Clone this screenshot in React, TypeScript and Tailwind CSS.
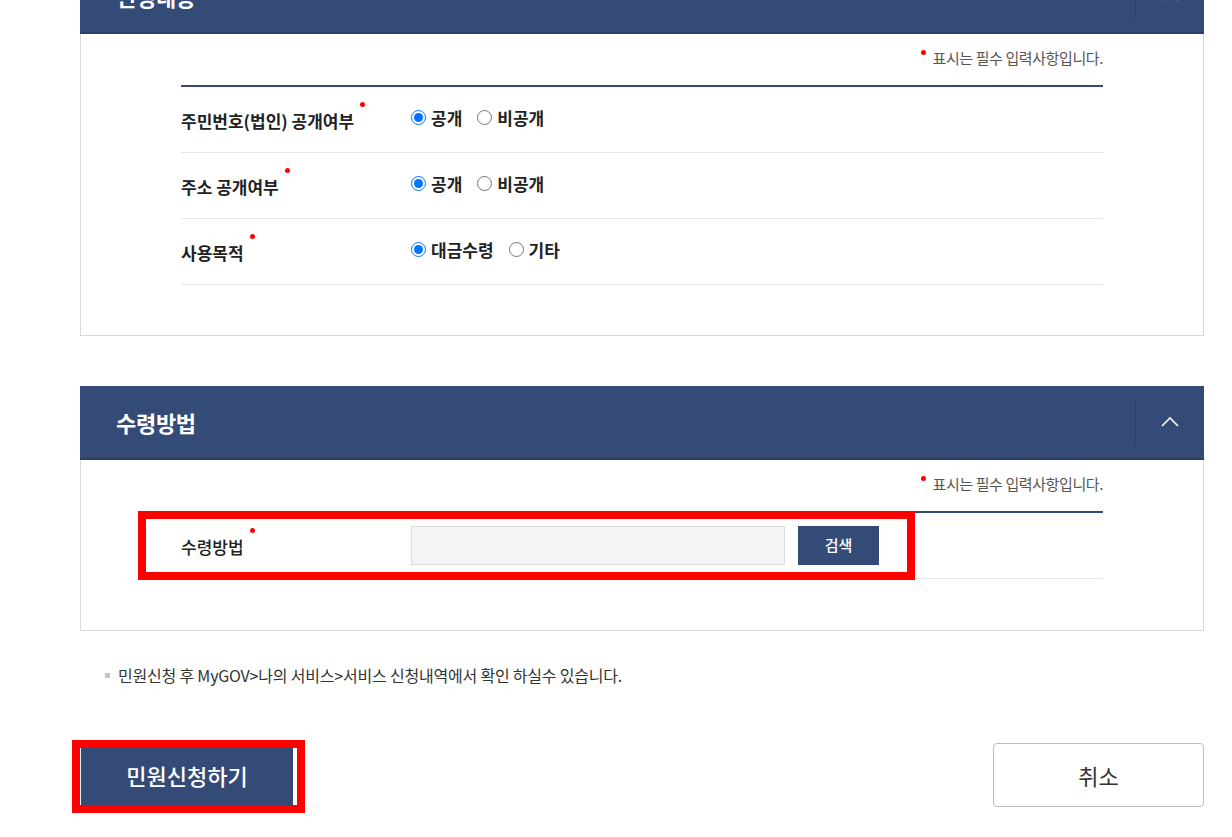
import type { ReactNode } from "react";

function Chevron() {
  return (
    <svg width="18" height="10" viewBox="0 0 18 10" fill="none">
      <polyline points="1,9 9,1 17,9" stroke="#ffffff" strokeWidth="1.6" />
    </svg>
  );
}

function Panel({ title, children, tall }: { title: string; children: ReactNode; tall?: boolean }) {
  return (
    <div>
      {/* header */}
      <div className="flex h-[74px] items-center bg-[#344b77] border-b-2 border-[#2a3f67]">
        <h2 className="flex-1 px-[36px] text-[22px] font-bold text-white tracking-[-0.3px]">{title}</h2>
        <div className="self-stretch my-[13px] w-px bg-[#2b4068]" />
        <button className="flex w-[68px] items-center justify-center">
          <Chevron />
        </button>
      </div>
      {/* body */}
      <div
        className={`border-x border-b border-[#d9d9d9] px-[100px] pt-[14px] ${tall ? "pb-[51px]" : "pb-[50px]"}`}
      >
        <div className="flex h-[20px] items-center justify-end text-[15px] text-[#555] tracking-[-0.4px]">
          <span className="mr-[7px] mb-[12px] h-[5px] w-[5px] rounded-full bg-[#f00]" />
          표시는 필수 입력사항입니다.
        </div>
        <div className="mt-[17px] border-t-2 border-[#344b77]">{children}</div>
      </div>
    </div>
  );
}

function Label({ text, bold = true }: { text: string; bold?: boolean }) {
  return (
    <div className="w-[230px] mt-[3px]">
      <span
        className={`relative text-[17px] text-[#222] ${bold ? "font-bold" : "font-medium"}`}
      >
        {text}
        <span className="absolute -right-[11px] -top-[6px] h-[5px] w-[5px] rounded-full bg-[#f00]" />
      </span>
    </div>
  );
}

function Radio({ name, label, checked }: { name: string; label: string; checked?: boolean }) {
  return (
    <label className="flex items-center gap-[5px] text-[17px] font-bold text-[#222]">
      <input type="radio" name={name} defaultChecked={checked} className="m-0 h-[15px] w-[15px]" />
      {label}
    </label>
  );
}

function RadioRow({ label, name, options }: { label: string; name: string; options: string[] }) {
  return (
    <div className="flex h-[66px] items-center border-b border-[#e6e6e6]">
      <Label text={label} />
      <div className="flex items-center gap-[15px] -mt-[4px]">
        {options.map((o, i) => (
          <Radio key={o} name={name} label={o} checked={i === 0} />
        ))}
      </div>
    </div>
  );
}

export default function App() {
  return (
    <div className="min-h-screen bg-white font-['Noto_Sans_CJK_KR','Noto_Sans',sans-serif]">
      <div className="ml-[80px] w-[1124px] -mt-[40px] pb-[30px]">
        <Panel title="신청내용">
          <RadioRow label="주민번호(법인) 공개여부" name="rrn" options={["공개", "비공개"]} />
          <RadioRow label="주소 공개여부" name="addr" options={["공개", "비공개"]} />
          <RadioRow label="사용목적" name="purpose" options={["대금수령", "기타"]} />
        </Panel>

        <div className="mt-[50px]">
          <Panel title="수령방법" tall>
            <div className="relative flex h-[66px] items-center border-b border-[#e6e6e6]">
              <Label text="수령방법" bold={false} />
              <input
                readOnly
                className="h-[39px] w-[374px] border border-[#dcdcdc] bg-[#f4f4f4] outline-none"
              />
              <button className="ml-[13px] h-[39px] w-[81px] bg-[#344b77] text-[15px] font-medium text-white">
                검색
              </button>
              {/* highlight */}
              <div className="pointer-events-none absolute -left-[43px] -top-[2px] h-[69px] w-[777px] border-[8px] border-[#f00]" />
            </div>
          </Panel>
        </div>

        <p className="mt-[34px] flex h-[20px] items-center pl-[25px] text-[16px] text-[#333] tracking-[-0.2px]">
          <span className="mr-[8px] h-[5px] w-[5px] bg-[#c4c4c4]" />
          민원신청 후 MyGOV&gt;나의 서비스&gt;서비스 신청내역에서 확인 하실수 있습니다.
        </p>

        <div className="mt-[58px] flex items-start justify-between">
          <div className="relative ml-px">
            <button className="h-[64px] w-[212px] bg-[#344b77] text-[22px] font-medium text-white">
              민원신청하기
            </button>
            <div className="pointer-events-none absolute -left-[9px] -top-[3px] h-[73px] w-[233px] border-[8px] border-[#f00]" />
          </div>
          <button className="h-[64px] w-[211px] rounded-[4px] border border-[#bdbdbd] bg-white text-[22px] text-[#333]">
            취소
          </button>
        </div>
      </div>
    </div>
  );
}
